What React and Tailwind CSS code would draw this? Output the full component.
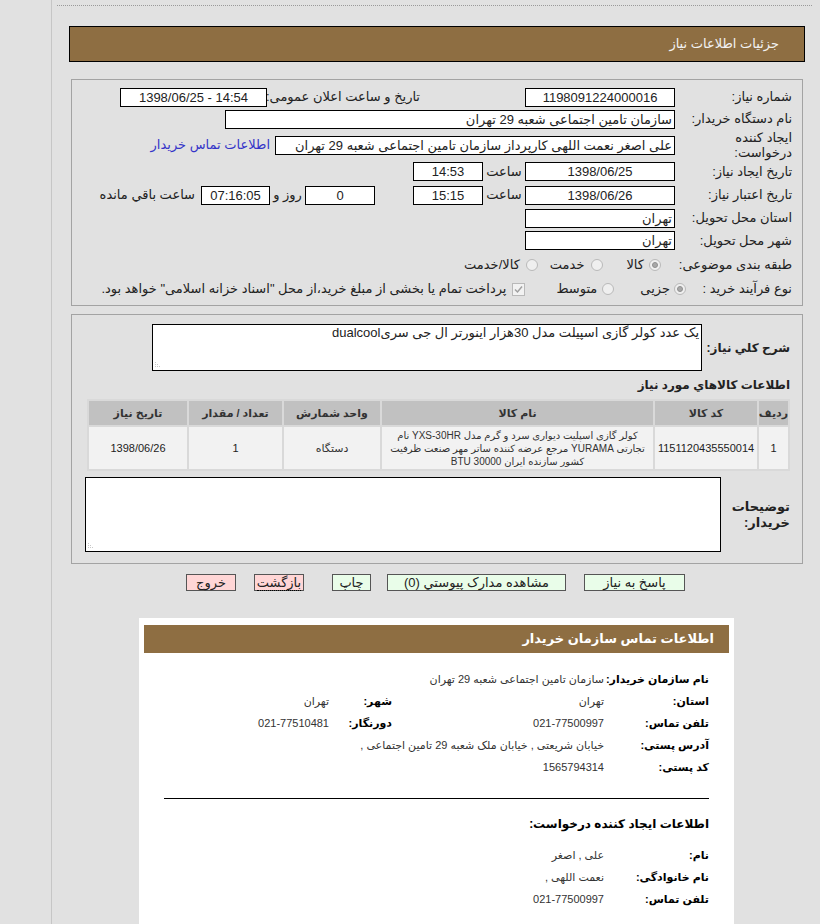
import React from 'react';

// فیلدهای فقط‌خواندنی فرم
const Box = ({ w, children, align = 'center', className = '', ltr }) => (
  <div
    dir={ltr ? 'ltr' : undefined}
    className={`h-[19px] shrink-0 border border-black bg-white leading-[17px] whitespace-nowrap overflow-hidden px-[2px] ${align === 'right' ? 'text-right' : 'text-center'} ${className}`}
    style={{ width: w }}
  >
    {children}
  </div>
);

const Radio = ({ checked }) => (
  <span className="w-[12px] h-[12px] shrink-0 rounded-full border border-[#b9b9b9] bg-[#efefef] flex items-center justify-center">
    {checked && <span className="w-[6px] h-[6px] rounded-full bg-[#a8a8a8] border border-[#909090]" />}
  </span>
);

const CheckBox = () => (
  <span className="w-[13px] h-[13px] shrink-0 border border-[#b9b9b9] bg-[#f2f2f2] flex items-center justify-center">
    <svg width="9" height="9" viewBox="0 0 9 9">
      <path d="M1 4.5 L3.5 7 L8 1.5" fill="none" stroke="#a0a0a0" strokeWidth="1.5" />
    </svg>
  </span>
);

const Grip = () => (
  <svg className="absolute left-[2px] bottom-[2px]" width="8" height="8" viewBox="0 0 8 8">
    <g fill="#c8c8c8">
      <rect x="0" y="6" width="1" height="1" />
      <rect x="2" y="6" width="1" height="1" />
      <rect x="4" y="6" width="1" height="1" />
      <rect x="0" y="4" width="1" height="1" />
      <rect x="2" y="4" width="1" height="1" />
      <rect x="0" y="2" width="1" height="1" />
    </g>
  </svg>
);

const Btn = ({ children, pink, w, className = '' }) => (
  <div
    className={`h-[17px] shrink-0 border border-[#555] leading-[15px] text-center text-[13px] text-[#222] ${pink ? 'bg-[#ffd6d6]' : 'bg-[#e9fde9]'} ${className}`}
    style={{ width: w }}
  >
    {children}
  </div>
);

const Row = ({ h = 22, children }) => (
  <div dir="rtl" className="flex items-center pr-[10px]" style={{ height: h }}>
    {children}
  </div>
);

const Label = ({ w = 117, children, className = '' }) => (
  <div className={`shrink-0 whitespace-nowrap text-[#222] ${className}`} style={{ width: w }}>
    {children}
  </div>
);

const InfoRow = ({ label, value, label2, value2 }) => (
  <div dir="rtl" className="flex items-center h-[22px] pr-[25px]">
    <div className="w-[105px] shrink-0 font-bold text-[11px] text-black whitespace-nowrap">{label}</div>
    <div className="w-[212px] shrink-0 text-[11px] text-[#333] whitespace-nowrap">{value}</div>
    {label2 && <div className="w-[63px] shrink-0 font-bold text-[11px] text-black">{label2}</div>}
    {value2 && <div className="text-[11px] text-[#333]">{value2}</div>}
  </div>
);

const cols = [
  { t: 'ردیف', w: 29 },
  { t: 'کد کالا', w: 102 },
  { t: 'نام کالا', w: 271 },
  { t: 'واحد شمارش', w: 96 },
  { t: 'تعداد / مقدار', w: 93 },
  { t: 'تاریخ نیاز', w: 98 },
];

export default function App() {
  return (
    <div className="min-h-screen bg-[#e1e1e1] flex font-['Liberation_Sans','DejaVu_Sans',sans-serif] text-[13px] text-[#222]">
      <div className="w-[52px] shrink-0 border-r border-[#c6c6c6]" />
      <div className="flex-1 pb-[40px]">
        <div className="mt-[5px] ml-[5px] mr-[8px] border-t border-dotted border-[#9a9a9a]" />

        {/* سربرگ */}
        <div dir="rtl" className="mt-[20px] ml-[17px] mr-[15px] h-[36px] bg-[#8e6e42] border border-black flex items-center pr-[25px] text-[13px] text-[#f2f2f2]">
          جزئیات اطلاعات نیاز
        </div>

        {/* پنل اول */}
        <div className="mt-[17px] ml-[19px] mr-[17px] border border-[#a3a3a3] pt-[6px] pb-[4px]">
          <Row>
            <Label>شماره نیاز:</Label>
            <Box w={150}>1198091224000016</Box>
            <Label w={153} className="mr-[105px]">تاریخ و ساعت اعلان عمومی:</Label>
            <Box w={147} ltr>1398/06/25 - 14:54</Box>
          </Row>
          <Row>
            <Label>نام دستگاه خریدار:</Label>
            <Box w={450} align="right">سازمان تامین اجتماعی شعبه 29 تهران</Box>
          </Row>
          <Row h={30}>
            <Label className="leading-[15px]">
              ایجاد کننده
              <br />
              درخواست:
            </Label>
            <Box w={400} align="right">علی اصغر  نعمت اللهی کارپرداز سازمان تامین اجتماعی شعبه 29 تهران</Box>
            <div className="mr-[5px] text-[#3434c8] whitespace-nowrap">اطلاعات تماس خریدار</div>
          </Row>
          <Row h={23}>
            <Label>تاریخ ایجاد نیاز:</Label>
            <Box w={150}>1398/06/25</Box>
            <div className="w-[42px] shrink-0 text-center">ساعت</div>
            <Box w={70}>14:53</Box>
          </Row>
          <Row h={24}>
            <Label>تاریخ اعتبار نیاز:</Label>
            <Box w={150}>1398/06/26</Box>
            <div className="w-[42px] shrink-0 text-center">ساعت</div>
            <Box w={70}>15:15</Box>
            <Box w={70} className="mr-[38px]">0</Box>
            <div className="w-[35px] shrink-0 text-center whitespace-nowrap">روز و</div>
            <Box w={69} className="bg-[#efebc6] border-[#555]">07:16:05</Box>
            <div className="mr-[6px] whitespace-nowrap">ساعت باقي مانده</div>
          </Row>
          <Row>
            <Label>استان محل تحویل:</Label>
            <Box w={150} align="right">تهران</Box>
          </Row>
          <Row h={23}>
            <Label>شهر محل تحویل:</Label>
            <Box w={150} align="right">تهران</Box>
          </Row>
          <Row h={25}>
            <Label>طبقه بندی موضوعی:</Label>
            <div className="flex items-center mr-[14px]">
              <Radio checked />
              <span className="mr-[5px]">کالا</span>
            </div>
            <div className="flex items-center mr-[23px]">
              <Radio />
              <span className="mr-[7px]">خدمت</span>
            </div>
            <div className="flex items-center mr-[12px]">
              <Radio />
              <span className="mr-[6px]">کالا/خدمت</span>
            </div>
          </Row>
          <Row h={24}>
            <Label w={106}>نوع فرآیند خرید :</Label>
            <div className="flex items-center">
              <Radio checked />
              <span className="mr-[4px]">جزیی</span>
            </div>
            <div className="flex items-center mr-[26px]">
              <Radio />
              <span className="mr-[5px]">متوسط</span>
            </div>
            <div className="flex items-center mr-[31px]">
              <CheckBox />
              <span className="mr-[6px] whitespace-nowrap">
                پرداخت تمام یا بخشی از مبلغ خرید،از محل "اسناد خزانه اسلامی" خواهد بود.
              </span>
            </div>
          </Row>
        </div>

        {/* پنل دوم */}
        <div dir="rtl" className="mt-[8px] ml-[19px] mr-[17px] border border-[#a3a3a3] pt-[9px] pb-[11px] pr-[12px]">
          <div className="flex items-center">
            <div className="w-[88px] shrink-0 font-bold text-[12px] whitespace-nowrap">شرح كلي نياز:</div>
            <div className="relative w-[550px] h-[47px] border border-black bg-white text-right px-[2px] leading-[16px]">
              یک عدد کولر گازی اسپیلت مدل 30هزار اینورتر ال جی سریdualcool
              <Grip />
            </div>
          </div>
          <div className="mt-[6px] h-[17px] font-bold text-[12px] leading-[17px]">اطلاعات كالاهاي مورد نياز</div>
          <table className="mt-[5px] w-[703px] table-fixed border-separate border-spacing-[2px] bg-[#d9d9d9] text-[11px]">
            <thead>
              <tr>
                {cols.map((c) => (
                  <th
                    key={c.t}
                    className="h-[24px] bg-[#c1c1c1] font-bold text-[#333] text-center whitespace-nowrap overflow-hidden p-0"
                    style={{ width: c.w }}
                  >
                    {c.t}
                  </th>
                ))}
              </tr>
            </thead>
            <tbody>
              <tr className="bg-[#f2f2f2] text-center">
                <td className="h-[42px] p-0">1</td>
                <td className="p-0">1151120435550014</td>
                <td className="p-0 text-[10px] leading-[13px] text-[#333] whitespace-nowrap overflow-hidden">
                  کولر گازی اسپلیت دیواری سرد و گرم مدل YXS-30HR نام
                  <br />
                  تجارتی YURAMA مرجع عرضه کننده ساتر مهر صنعت ظرفیت
                  <br />
                  کشور سازنده ایران BTU 30000
                </td>
                <td className="p-0 text-[#333]">دستگاه</td>
                <td className="p-0">1</td>
                <td className="p-0">1398/06/26</td>
              </tr>
            </tbody>
          </table>
          <div className="mt-[6px] flex items-center">
            <div className="w-[69px] shrink-0 font-bold leading-[16px]">
              توضیحات
              <br />
              خریدار:
            </div>
            <div className="relative w-[636px] h-[75px] border border-black bg-white">
              <Grip />
            </div>
          </div>
        </div>

        {/* دکمه‌ها */}
        <div dir="rtl" className="mt-[10px] flex items-center pr-[135px]">
          <Btn w={101}>پاسخ به نیاز</Btn>
          <Btn w={179} className="mr-[18px]">مشاهده مدارک پیوستي (0)</Btn>
          <Btn w={39} className="mr-[16px]">چاپ</Btn>
          <Btn w={50} pink className="mr-[28px]">
            <span className="border-b border-dotted border-black">بازگشت</span>
          </Btn>
          <Btn w={50} pink className="mr-[18px]">خروج</Btn>
        </div>

        {/* اطلاعات تماس */}
        <div className="mt-[27px] ml-[87px] w-[595px] bg-white pt-[7px] px-[5px] pb-[30px]">
          <div dir="rtl" className="h-[28px] bg-[#8e6e42] flex items-center pr-[15px] font-bold text-[13px] text-white">
            اطلاعات تماس سازمان خریدار
          </div>
          <div className="-mx-[5px] pt-[15px]">
            <InfoRow label="نام سازمان خریدار:" value="سازمان تامین اجتماعی شعبه 29 تهران" />
            <InfoRow label="استان:" value="تهران" label2="شهر:" value2="تهران" />
            <InfoRow label="تلفن تماس:" value="021-77500997" label2="دورنگار:" value2="021-77510481" />
            <InfoRow label="آدرس پستی:" value="خیابان شریعتی , خیابان ملک شعبه 29 تامین اجتماعی ," />
            <InfoRow label="کد پستی:" value="1565794314" />
            <div className="mx-[25px] mt-[20px] border-t border-black" />
            <div dir="rtl" className="mt-[14px] h-[22px] flex items-center pr-[25px] font-bold text-[12px] text-black">
              اطلاعات ایجاد کننده درخواست:
            </div>
            <div className="h-[9px]" />
            <InfoRow label="نام:" value="علی , اصغر" />
            <InfoRow label="نام خانوادگی:" value="نعمت اللهی ," />
            <InfoRow label="تلفن تماس:" value="021-77500997" />
          </div>
        </div>
      </div>
    </div>
  );
}
